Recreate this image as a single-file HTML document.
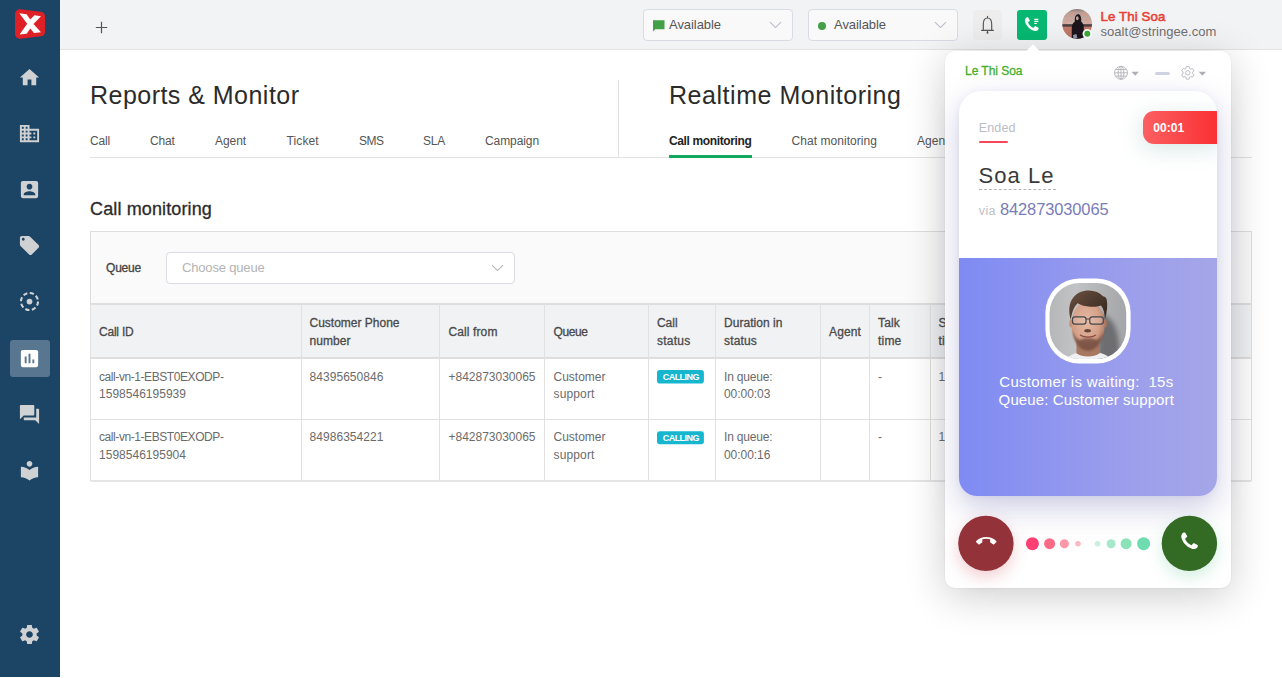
<!DOCTYPE html>
<html lang="en">
<head>
<meta charset="utf-8">
<title>Reports &amp; Monitor</title>
<style>
*{box-sizing:border-box;margin:0;padding:0}
html,body{width:1282px;height:678px;overflow:hidden;background:#fff;font-family:"Liberation Sans",sans-serif;color:#666;font-size:12px}
.abs{position:absolute}
.t{position:absolute;white-space:pre;display:block}
#side{position:absolute;left:0;top:0;width:60px;height:677px;background:#1b4465}
#side svg{position:absolute;fill:#cfd1d3}
#side .active{position:absolute;left:10px;top:340px;width:40px;height:37px;background:#587690;border-radius:3px}
#top{position:absolute;left:60px;top:0;width:1222px;height:50px;background:#f2f3f5;border-bottom:1px solid #e2e2e3}
.sel{position:absolute;top:9px;height:32px;width:150px;border:1px solid #d9dce5;border-radius:4px;background:#f9f9fa}
.line{position:absolute;background:#e2e2e2}
#filter{position:absolute;left:90px;top:231px;width:1162px;height:75px;border:1px solid #dedede;background:#fafafa}
#qsel{position:absolute;left:166px;top:252px;width:349px;height:32px;border:1px solid #d9dce6;border-radius:4px;background:#fff}
#thead{position:absolute;left:90px;top:303px;width:1162px;height:56px;background:#f1f2f4;border-top:2px solid #dedede;border-bottom:2px solid #dedede}
.vl{position:absolute;top:304px;width:1px;height:177px;background:#e1e1e1}
.hl{position:absolute;left:90px;width:1162px;height:1px;background:#e1e1e1}
.badge{position:absolute;left:657px;width:47px;height:13px;background:#17b6cf;border-radius:2px}
#w{position:absolute;left:944.7px;top:51px;width:286.6px;height:537px;background:#fff;border-radius:10px;box-shadow:0 8px 40px rgba(0,0,0,.2),0 0 0 1px rgba(0,0,0,.025)}
#card{position:absolute;left:959px;top:91px;width:258px;height:405px;border-radius:22px 22px 18px 18px;background:#fff;box-shadow:0 12px 30px rgba(108,108,175,.34),0 0 6px rgba(120,120,220,.08);overflow:hidden}
#purple{position:absolute;left:0;top:167px;width:258px;height:238px;background:linear-gradient(90deg,#7f8bf3 0%,#9a9dec 60%,#a5a6e8 100%)}
#timer{position:absolute;left:184px;top:20px;width:80px;height:33px;border-radius:11px 0 0 11px;background:linear-gradient(90deg,#fb6062,#fa2c2f);box-shadow:-2px 5px 22px rgba(130,180,175,.3)}
.dot{position:absolute;border-radius:50%}
.btn{position:absolute;top:516px;width:55px;height:55px;border-radius:50%}
</style>
</head>
<body>
<div id="side">
  <div class="active"></div>
<svg style="left:15px;top:9px" width="30" height="30" viewBox="0 0 30 30"><path d="M5 5.200L25 7.600V22.400L5 24.900Z" fill="#e02027" stroke="#e02027" stroke-width="10" stroke-linejoin="round"/><path d="M4.300 4.200L11.600 5.200L15.300 10.600L19.400 6.200L26 7.200L18.500 15L26 23.300L19 24L15.300 19.400L11.700 24.800L4.600 25.600L12.200 14.800Z" fill="#fff"/></svg>
<svg style="left:18px;top:66.0px" width="23" height="23" viewBox="0 0 24 24"><path d="M10 20v-6h4v6h5v-8h3L12 3 2 12h3v8z"/></svg>
<svg style="left:18px;top:122.0px" width="23" height="23" viewBox="0 0 24 24"><path d="M12 7V3H2v18h20V7H12zM6 19H4v-2h2v2zm0-4H4v-2h2v2zm0-4H4V9h2v2zm0-4H4V5h2v2zm4 12H8v-2h2v2zm0-4H8v-2h2v2zm0-4H8V9h2v2zm0-4H8V5h2v2zm10 12h-8v-2h2v-2h-2v-2h2v-2h-2V9h8v10zm-2-8h-2v2h2v-2zm0 4h-2v2h2v-2z"/></svg>
<svg style="left:18px;top:178.0px" width="23" height="23" viewBox="0 0 24 24"><path d="M3 5v14c0 1.1.89 2 2 2h14c1.1 0 2-.9 2-2V5c0-1.1-.9-2-2-2H5c-1.11 0-2 .9-2 2zm12 4c0 1.66-1.34 3-3 3s-3-1.34-3-3 1.34-3 3-3 3 1.34 3 3zm-9 8c0-2 4-3.1 6-3.1s6 1.1 6 3.1v1H6v-1z"/></svg>
<svg style="left:18px;top:234.0px" width="23" height="23" viewBox="0 0 24 24"><path d="M21.41 11.58l-9-9C12.05 2.22 11.55 2 11 2H4c-1.1 0-2 .9-2 2v7c0 .55.22 1.05.59 1.42l9 9c.36.36.86.58 1.41.58.55 0 1.05-.22 1.41-.59l7-7c.37-.36.59-.86.59-1.41 0-.55-.23-1.06-.59-1.42zM5.5 7C4.67 7 4 6.33 4 5.5S4.67 4 5.5 4 7 4.67 7 5.5 6.33 7 5.5 7z"/></svg>
<svg style="left:18px;top:290.0px" width="23" height="23" viewBox="0 0 24 24"><circle cx="12" cy="12" r="8.9" fill="none" stroke="#cfd1d3" stroke-width="2.2" stroke-dasharray="4.4 2.59"/><circle cx="12" cy="12" r="3"/></svg>
<svg style="left:18px;top:347.0px;fill:#fff" width="23" height="23" viewBox="0 0 24 24"><path d="M19 3H5c-1.1 0-2 .9-2 2v14c0 1.1.9 2 2 2h14c1.1 0 2-.9 2-2V5c0-1.1-.9-2-2-2zM9 17H7v-7h2v7zm4 0h-2V7h2v10zm4 0h-2v-4h2v4z"/></svg>
<svg style="left:18px;top:403.0px" width="23" height="23" viewBox="0 0 24 24"><path d="M21 6h-2v9H6v2c0 .55.45 1 1 1h11l4 4V7c0-.55-.45-1-1-1zm-4 6V3c0-.55-.45-1-1-1H3c-.55 0-1 .45-1 1v14l4-4h10c.55 0 1-.45 1-1z"/></svg>
<svg style="left:18px;top:459.0px" width="23" height="23" viewBox="0 0 24 24"><path d="M12 11.55C9.64 9.35 6.48 8 3 8v11c3.48 0 6.64 1.35 9 3.55 2.36-2.19 5.52-3.55 9-3.55V8c-3.48 0-6.64 1.35-9 3.55zM12 8c1.66 0 3-1.34 3-3s-1.34-3-3-3-3 1.34-3 3 1.34 3 3 3z"/></svg>
<svg style="left:18px;top:623.0px" width="23" height="23" viewBox="0 0 24 24"><path d="M19.43 12.98c.04-.32.07-.64.07-.98s-.03-.66-.07-.98l2.11-1.65c.19-.15.24-.42.12-.64l-2-3.46c-.12-.22-.39-.3-.61-.22l-2.49 1c-.52-.4-1.08-.73-1.69-.98l-.38-2.65C14.46 2.18 14.25 2 14 2h-4c-.25 0-.46.18-.49.42l-.38 2.65c-.61.25-1.17.59-1.69.98l-2.49-1c-.23-.09-.49 0-.61.22l-2 3.46c-.13.22-.07.49.12.64l2.11 1.65c-.04.32-.07.65-.07.98s.03.66.07.98l-2.11 1.65c-.19.15-.24.42-.12.64l2 3.46c.12.22.39.3.61.22l2.49-1c.52.4 1.08.73 1.69.98l.38 2.65c.03.24.24.42.49.42h4c.25 0 .46-.18.49-.42l.38-2.65c.61-.25 1.17-.59 1.69-.98l2.49 1c.23.09.49 0 .61-.22l2-3.46c.12-.22.07-.49-.12-.64l-2.11-1.65zM12 15.5c-1.93 0-3.5-1.57-3.5-3.5s1.57-3.5 3.5-3.5 3.5 1.57 3.5 3.5-1.57 3.5-3.5 3.5z"/></svg>

</div>
<div id="top"></div>
<svg class="abs" style="left:95px;top:21px" width="13" height="13" viewBox="0 0 13 13"><path d="M6.5 0.8V12.2M0.8 6.5H12.2" stroke="#555" stroke-width="1.2" fill="none"/></svg>
<div class="sel" style="left:643px"></div>
<svg class="abs" style="left:652px;top:19px" width="14" height="14" viewBox="0 0 14 14"><path d="M1 1.2h11.5v9H3.2L1 12.4z" fill="#43a047"/></svg>
<svg class="abs" style="left:769px;top:21px" width="13" height="8" viewBox="0 0 13 8"><path d="M1 1.2l5.5 5.4L12 1.2" stroke="#b9bcc6" stroke-width="1.1" fill="none"/></svg>
<div class="sel" style="left:808px"></div>
<div class="abs" style="left:817.8px;top:21.7px;width:8.4px;height:8.4px;border-radius:50%;background:#43a047"></div>
<svg class="abs" style="left:934px;top:21px" width="13" height="8" viewBox="0 0 13 8"><path d="M1 1.2l5.5 5.4L12 1.2" stroke="#b9bcc6" stroke-width="1.1" fill="none"/></svg>
<div class="abs" style="left:973px;top:10px;width:29px;height:30px;border-radius:4px;background:#ededee"></div>
<svg class="abs" style="left:979px;top:14px" width="17" height="22" viewBox="0 0 17 22"><path d="M8.500 2.300V3.700M4.300 16.200V10.200C4.300 6.300 6 4 8.500 4S12.700 6.300 12.700 10.200V16.200M2.600 16.300H14.400" stroke="#555" stroke-width="1.150" fill="none" stroke-linecap="round"/><circle cx="8.500" cy="18.800" r="1" fill="#555"/><path d="M8.500 16.300v1.800" stroke="#555" stroke-width="1.100"/></svg>
<div class="abs" style="left:1017px;top:10px;width:30.3px;height:30px;border-radius:3px;background:#06b872"></div>
<svg class="abs" style="left:1023px;top:16.1px" width="17.5" height="17.5" viewBox="0 0 1792 1792"><path d="M1600 1240q0 27-10 70.500t-21 68.500q-21 50-122 106-94 51-186 51-27 0-53-3.500t-57.500-12.500-47-14.500-55.500-20.500-49-18q-98-35-175-83-127-79-264-216t-216-264q-48-77-83-175-3-9-18-49t-20.500-55.500-14.500-47-12.500-57.500-3.500-53q0-92 51-186 56-101 106-122 25-11 68.500-21t70.500-10q14 0 21 3 18 6 53 76 11 19 30 54t35 63.500 31 53.500q3 4 17.500 25t21.500 35.500 7 28.500q0 20-28.500 50t-62 55-62 53-28.500 46q0 9 5 22.500t8.500 20.500 14 24 11.500 19q76 137 174 235t235 174q2 1 19 11.500t24 14 20.500 8.500 22.500 5q18 0 46-28.500t53-62 55-62 50-28.500q14 0 28.500 7t35.500 21.500 25 17.500q25 15 53.500 31t63.500 35 54 30q70 35 76 53 3 7 3 21z" fill="#fff"/></svg>
<svg class="abs" style="left:1033px;top:17px" width="8" height="9" viewBox="0 0 8 9"><path d="M1.300 2.300h4M1.300 4.400h4M1.300 6.500h2.600" stroke="#fff" stroke-width="1.200"/></svg>
<!-- avatar -->
<svg class="abs" style="left:1061px;top:8px" width="34" height="34" viewBox="0 0 34 34">
<defs><clipPath id="avc"><circle cx="16.15" cy="15.9" r="14.9"/></clipPath>
<linearGradient id="avg" x1="0" y1="0" x2="0" y2="1"><stop offset="0" stop-color="#7d6f6f"/><stop offset=".12" stop-color="#b59c95"/><stop offset=".46" stop-color="#cdb3a8"/><stop offset=".49" stop-color="#4a3f3f"/><stop offset=".53" stop-color="#4a3f3f"/><stop offset=".57" stop-color="#c17a6a"/><stop offset="1" stop-color="#b87466"/></linearGradient>
<filter id="ab" x="-30%" y="-30%" width="160%" height="160%"><feGaussianBlur stdDeviation=".45"/></filter></defs>
<g clip-path="url(#avc)"><rect width="34" height="34" fill="url(#avg)"/>
<g filter="url(#ab)"><path d="M3 6h5v3H3zM11 4h4v3h-4zM21 5h5v3h-5zM5 11h6v2.500H5zM23 10h6v3h-6zM2 14h4v2H2zM25 14.500h5v1.500h-5z" fill="#d9998a" opacity=".55"/>
<path d="M10.800 32V19.500c0-3 1.600-5 3-5.800C13.500 9 14.800 6.200 17 6.200s3.600 2.500 3.200 7.500c1.400.8 2.600 3 2.600 5.800V32z" fill="#1c161b"/>
<ellipse cx="16.300" cy="10.300" rx="1.300" ry="2" fill="#c9a394"/>
<path d="M12 27l3.500-1 .8 4-3.800 1z" fill="#8d9bab"/></g></g>
<circle cx="26.3" cy="25.8" r="4.800" fill="#fff"/><circle cx="26.300" cy="25.800" r="3" fill="#3daa37"/></svg>

<div class="line" style="left:90px;top:157px;width:1162px;height:1px"></div>
<div class="line" style="left:618px;top:80px;width:1px;height:78px"></div>
<div class="abs" style="left:669px;top:155px;width:83px;height:3px;background:#14a75f"></div>
<div id="filter"></div>
<div id="qsel"></div>
<svg class="abs" style="left:491px;top:264px" width="13" height="8" viewBox="0 0 13 8"><path d="M1 1.2l5.5 5.4L12 1.2" stroke="#b5b5b5" stroke-width="1.1" fill="none"/></svg>
<div id="thead"></div>
<div class="hl" style="top:419px"></div>
<div class="hl" style="top:480px;height:2px;background:#e6e6e6;border-radius:0 0 2px 2px"></div>
<div class="vl" style="left:90px"></div>
<div class="vl" style="left:301px"></div>
<div class="vl" style="left:439px"></div>
<div class="vl" style="left:544px"></div>
<div class="vl" style="left:648px"></div>
<div class="vl" style="left:715px"></div>
<div class="vl" style="left:820px"></div>
<div class="vl" style="left:869px"></div>
<div class="vl" style="left:930px"></div>
<div class="vl" style="left:1251px"></div>

<svg class="abs" style="left:655px;top:368px" width="52" height="80" viewBox="0 0 52 80"><rect x="2" y="2.100" width="46.900" height="13.400" rx="2.800" fill="#17b6cf"/><rect x="2" y="63.300" width="46.900" height="13" rx="2.800" fill="#17b6cf"/></svg>
<span class="t" style="left:90.00px;top:83.00px;font-size:25px;line-height:25px;color:#2b2b2b;letter-spacing:0.472px;">Reports &amp; Monitor</span>
<span class="t" style="left:669.00px;top:83.00px;font-size:25px;line-height:25px;color:#2b2b2b;letter-spacing:0.535px;">Realtime Monitoring</span>
<span class="t" style="left:90.00px;top:135.00px;font-size:12px;line-height:12px;color:#555;letter-spacing:-0.168px;">Call</span>
<span class="t" style="left:150.00px;top:135.00px;font-size:12px;line-height:12px;color:#555;letter-spacing:-0.140px;">Chat</span>
<span class="t" style="left:215.00px;top:135.00px;font-size:12px;line-height:12px;color:#555;letter-spacing:-0.072px;">Agent</span>
<span class="t" style="left:286.50px;top:135.00px;font-size:12px;line-height:12px;color:#555;letter-spacing:0.123px;">Ticket</span>
<span class="t" style="left:359.00px;top:135.00px;font-size:12px;line-height:12px;color:#555;letter-spacing:-0.505px;">SMS</span>
<span class="t" style="left:423.00px;top:135.00px;font-size:12px;line-height:12px;color:#555;letter-spacing:-0.229px;">SLA</span>
<span class="t" style="left:485.00px;top:135.00px;font-size:12px;line-height:12px;color:#555;letter-spacing:-0.088px;">Campaign</span>
<span class="t" style="left:669.00px;top:135.00px;font-size:12px;line-height:12px;color:#222;font-weight:700;letter-spacing:-0.367px;">Call monitoring</span>
<span class="t" style="left:791.50px;top:135.00px;font-size:12px;line-height:12px;color:#555;letter-spacing:0.052px;">Chat monitoring</span>
<span class="t" style="left:917.00px;top:135.00px;font-size:12px;line-height:12px;color:#555;letter-spacing:0.017px;">Agent monitoring</span>
<span class="t" style="left:90.00px;top:200.00px;font-size:18px;line-height:18px;color:#2b2b2b;letter-spacing:0.129px;-webkit-text-stroke:0.3px #2b2b2b;">Call monitoring</span>
<span class="t" style="left:106.00px;top:262.00px;font-size:12px;line-height:12px;color:#444;letter-spacing:-0.206px;-webkit-text-stroke:0.3px #444;">Queue</span>
<span class="t" style="left:182.00px;top:261.00px;font-size:13px;line-height:13px;color:#b4b4b4;letter-spacing:-0.173px;">Choose queue</span>
<span class="t" style="left:669.00px;top:17.60px;font-size:13px;line-height:13px;color:#555;letter-spacing:-0.059px;">Available</span>
<span class="t" style="left:834.00px;top:17.60px;font-size:13px;line-height:13px;color:#555;letter-spacing:-0.059px;">Available</span>
<span class="t" style="left:1100.50px;top:10.20px;font-size:13.2px;line-height:13.2px;color:#ea4034;letter-spacing:0.145px;-webkit-text-stroke:0.55px #ea4034;">Le Thi Soa</span>
<span class="t" style="left:1100.50px;top:25.30px;font-size:13px;line-height:13px;color:#707070;letter-spacing:0.051px;">soalt@stringee.com</span>
<span class="t" style="left:99.00px;top:326.00px;font-size:12px;line-height:12px;color:#4a4a4a;letter-spacing:-0.217px;-webkit-text-stroke:0.3px #4a4a4a;">Call ID</span>
<span class="t" style="left:309.50px;top:317.00px;font-size:12px;line-height:12px;color:#4a4a4a;-webkit-text-stroke:0.3px #4a4a4a;">Customer Phone</span>
<span class="t" style="left:309.50px;top:335.00px;font-size:12px;line-height:12px;color:#4a4a4a;letter-spacing:0.052px;-webkit-text-stroke:0.3px #4a4a4a;">number</span>
<span class="t" style="left:448.50px;top:326.00px;font-size:12px;line-height:12px;color:#4a4a4a;letter-spacing:0.109px;-webkit-text-stroke:0.3px #4a4a4a;">Call from</span>
<span class="t" style="left:553.50px;top:326.00px;font-size:12px;line-height:12px;color:#4a4a4a;letter-spacing:-0.406px;-webkit-text-stroke:0.3px #4a4a4a;">Queue</span>
<span class="t" style="left:657.00px;top:317.00px;font-size:12px;line-height:12px;color:#4a4a4a;letter-spacing:-0.043px;-webkit-text-stroke:0.3px #4a4a4a;">Call</span>
<span class="t" style="left:657.00px;top:335.00px;font-size:12px;line-height:12px;color:#4a4a4a;letter-spacing:0.247px;-webkit-text-stroke:0.3px #4a4a4a;">status</span>
<span class="t" style="left:724.00px;top:317.00px;font-size:12px;line-height:12px;color:#4a4a4a;letter-spacing:0.043px;-webkit-text-stroke:0.3px #4a4a4a;">Duration in</span>
<span class="t" style="left:724.00px;top:335.00px;font-size:12px;line-height:12px;color:#4a4a4a;letter-spacing:0.164px;-webkit-text-stroke:0.3px #4a4a4a;">status</span>
<span class="t" style="left:829.00px;top:326.00px;font-size:12px;line-height:12px;color:#4a4a4a;letter-spacing:0.128px;-webkit-text-stroke:0.3px #4a4a4a;">Agent</span>
<span class="t" style="left:878.00px;top:317.00px;font-size:12px;line-height:12px;color:#4a4a4a;letter-spacing:0.164px;-webkit-text-stroke:0.3px #4a4a4a;">Talk</span>
<span class="t" style="left:878.00px;top:335.00px;font-size:12px;line-height:12px;color:#4a4a4a;letter-spacing:0.207px;-webkit-text-stroke:0.3px #4a4a4a;">time</span>
<span class="t" style="left:938.50px;top:317.00px;font-size:12px;line-height:12px;color:#4a4a4a;letter-spacing:0.231px;-webkit-text-stroke:0.3px #4a4a4a;">Start</span>
<span class="t" style="left:938.50px;top:335.00px;font-size:12px;line-height:12px;color:#4a4a4a;letter-spacing:0.207px;-webkit-text-stroke:0.3px #4a4a4a;">time</span>
<span class="t" style="left:99.00px;top:371.00px;font-size:12px;line-height:12px;color:#6b6b6b;letter-spacing:-0.423px;">call-vn-1-EBST0EXODP-</span>
<span class="t" style="left:99.00px;top:388.00px;font-size:12px;line-height:12px;color:#6b6b6b;letter-spacing:0.018px;">1598546195939</span>
<span class="t" style="left:309.50px;top:371.00px;font-size:12px;line-height:12px;color:#6b6b6b;letter-spacing:0.053px;">84395650846</span>
<span class="t" style="left:448.50px;top:371.00px;font-size:12px;line-height:12px;color:#6b6b6b;letter-spacing:-0.007px;">+842873030065</span>
<span class="t" style="left:553.50px;top:371.00px;font-size:12px;line-height:12px;color:#6b6b6b;">Customer</span>
<span class="t" style="left:553.50px;top:388.00px;font-size:12px;line-height:12px;color:#6b6b6b;letter-spacing:0.138px;">support</span>
<span class="t" style="left:724.00px;top:371.00px;font-size:12px;line-height:12px;color:#6b6b6b;letter-spacing:-0.172px;">In queue:</span>
<span class="t" style="left:724.00px;top:388.00px;font-size:12px;line-height:12px;color:#6b6b6b;letter-spacing:-0.052px;">00:00:03</span>
<span class="t" style="left:878.00px;top:371.00px;font-size:12px;line-height:12px;color:#6b6b6b;">-</span>
<span class="t" style="left:938.50px;top:371.00px;font-size:12px;line-height:12px;color:#6b6b6b;letter-spacing:0.075px;">1598546195</span>
<span class="t" style="left:662.70px;top:373.00px;font-size:9px;line-height:9px;color:#fff;font-weight:700;letter-spacing:-0.529px;">CALLING</span>
<span class="t" style="left:99.00px;top:431.00px;font-size:12px;line-height:12px;color:#6b6b6b;letter-spacing:-0.423px;">call-vn-1-EBST0EXODP-</span>
<span class="t" style="left:99.00px;top:449.00px;font-size:12px;line-height:12px;color:#6b6b6b;letter-spacing:0.018px;">1598546195904</span>
<span class="t" style="left:309.50px;top:431.00px;font-size:12px;line-height:12px;color:#6b6b6b;letter-spacing:0.053px;">84986354221</span>
<span class="t" style="left:448.50px;top:431.00px;font-size:12px;line-height:12px;color:#6b6b6b;letter-spacing:-0.007px;">+842873030065</span>
<span class="t" style="left:553.50px;top:431.00px;font-size:12px;line-height:12px;color:#6b6b6b;">Customer</span>
<span class="t" style="left:553.50px;top:449.00px;font-size:12px;line-height:12px;color:#6b6b6b;letter-spacing:0.138px;">support</span>
<span class="t" style="left:724.00px;top:431.00px;font-size:12px;line-height:12px;color:#6b6b6b;letter-spacing:-0.172px;">In queue:</span>
<span class="t" style="left:724.00px;top:449.00px;font-size:12px;line-height:12px;color:#6b6b6b;letter-spacing:-0.052px;">00:00:16</span>
<span class="t" style="left:878.00px;top:431.00px;font-size:12px;line-height:12px;color:#6b6b6b;">-</span>
<span class="t" style="left:938.50px;top:431.00px;font-size:12px;line-height:12px;color:#6b6b6b;letter-spacing:0.075px;">1598546195</span>
<span class="t" style="left:662.70px;top:434.00px;font-size:9px;line-height:9px;color:#fff;font-weight:700;letter-spacing:-0.529px;">CALLING</span>

<!-- widget -->
<div id="w"></div>
<svg class="abs" style="left:1023px;top:43px" width="20" height="9" viewBox="0 0 20 9"><path d="M2.5 9L10 1.2L17.5 9z" fill="#fff"/></svg>
<svg class="abs" style="left:1113px;top:64px" width="30" height="17" viewBox="0 0 30 17"><g stroke="#b3b4ba" stroke-width=".9" fill="none"><circle cx="8" cy="8.800" r="6.500"/><ellipse cx="8" cy="8.800" rx="2.900" ry="6.500"/><path d="M1.500 8.800h13M2.400 5.500h11.200M2.400 12.100h11.200M8 2.300v13"/></g><path d="M18.500 7.800h7.400l-3.700 4z" fill="#b0b1b7"/></svg>
<div class="abs" style="left:1155px;top:72px;width:15px;height:3px;border-radius:1.5px;background:#d0d3e3"></div>
<svg class="abs" style="left:1180px;top:64px" width="30" height="17" viewBox="0 0 30 17"><g transform="translate(0.3,1.300) scale(0.625)"><path d="M19.43 12.98c.04-.32.07-.64.07-.98s-.03-.66-.07-.98l2.11-1.65c.19-.15.24-.42.12-.64l-2-3.46c-.12-.22-.39-.3-.61-.22l-2.49 1c-.52-.4-1.08-.73-1.69-.98l-.38-2.65C14.46 2.18 14.25 2 14 2h-4c-.25 0-.46.18-.49.42l-.38 2.65c-.61.25-1.17.59-1.69.98l-2.49-1c-.23-.09-.49 0-.61.22l-2 3.46c-.13.22-.07.49.12.64l2.11 1.65c-.04.32-.07.65-.07.98s.03.66.07.98l-2.11 1.65c-.19.15-.24.42-.12.64l2 3.46c.12.22.39.3.61.22l2.49-1c.52.4 1.08.73 1.69.98l.38 2.65c.03.24.24.42.49.42h4c.25 0 .46-.18.49-.42l.38-2.65c.61-.25 1.17-.59 1.69-.98l2.49 1c.23.09.49 0 .61-.22l2-3.46c.12-.22.07-.49-.12-.64l-2.11-1.65z" fill="none" stroke="#b3b4ba" stroke-width="1.400"/><circle cx="12" cy="12" r="3.600" fill="none" stroke="#b3b4ba" stroke-width="1.400"/></g><path d="M18.700 7.800h7.400l-3.700 4z" fill="#b0b1b7"/></svg>
<div id="card">
  <div id="purple"></div>
  <div id="timer"></div>
  <div class="abs" style="left:20px;top:50px;width:29px;height:2px;background:#f4475a;border-radius:1px"></div>
  <div class="abs" style="left:20px;top:98px;width:77px;height:0;border-top:1px dashed #b5b5b5"></div>
</div>
<svg class="abs" style="left:1045px;top:278px" width="86" height="86" viewBox="0 0 86 86">
<defs><clipPath id="fc"><rect x="4.6" y="5" width="76.6" height="76" rx="30" ry="30"/></clipPath>
<linearGradient id="fbg" x1="0" y1="0" x2="1" y2="0"><stop offset="0" stop-color="#b3b4b6"/><stop offset=".35" stop-color="#c2c3c5"/><stop offset=".7" stop-color="#b0b1b3"/><stop offset="1" stop-color="#a2a3a6"/></linearGradient>
<radialGradient id="fsk" cx=".45" cy=".42" r=".62"><stop offset="0" stop-color="#e6bba3"/><stop offset=".65" stop-color="#d4a088"/><stop offset="1" stop-color="#a97762"/></radialGradient>
<linearGradient id="fhr" x1="0" y1="0" x2="1" y2="1"><stop offset="0" stop-color="#6b5142"/><stop offset=".5" stop-color="#4e3a2e"/><stop offset="1" stop-color="#33241c"/></linearGradient>
<filter id="b1" x="-30%" y="-30%" width="160%" height="160%"><feGaussianBlur stdDeviation="1"/></filter>
<filter id="b2" x="-30%" y="-30%" width="160%" height="160%"><feGaussianBlur stdDeviation="2.5"/></filter>
<filter id="b05" x="-30%" y="-30%" width="160%" height="160%"><feGaussianBlur stdDeviation=".5"/></filter></defs>
<rect x="0.4" y="0.4" width="85.2" height="85.2" rx="34" ry="34" fill="#fff"/>
<g clip-path="url(#fc)">
<rect width="86" height="86" fill="url(#fbg)"/>
<path d="M55 36c6 0 14 6 17 18s3 22 0 30H52z" fill="#58585c" opacity=".75" filter="url(#b2)"/>
<path d="M20 86c1-7 6-10 14-11.500h19c8 1.500 13 4.500 14 11.500z" fill="#efeff1" filter="url(#b05)"/>
<path d="M31.500 62h23v13.500c-6 4-17 4-23 0z" fill="#a87762" filter="url(#b05)"/>
<ellipse cx="26.300" cy="45.500" rx="2" ry="4" fill="#c48f78"/><ellipse cx="60" cy="45.500" rx="2" ry="4" fill="#a8745f"/>
<ellipse cx="43" cy="47" rx="16.600" ry="24" fill="url(#fsk)" filter="url(#b05)"/>
<path d="M27.500 53c1.500 12 8 19.500 15.500 19.500S57 65 58.500 53c-2 6-4.500 8.500-7.500 9-3.500-2.500-12.500-2.500-16 0-3-.5-5.500-3-7.500-9z" fill="#6e4a3c" opacity=".8" filter="url(#b1)"/>
<path d="M25.800 42c-2.500-9-2-17 2.500-22.500 3.500-4.500 9-7 15.500-7 6 0 11 2 14.500 6 1.500-.3 3 1 3.500 3.500 1 5 .3 12-1.800 19.500-.3-6.500-1.500-11-4-14-3 1-6.500 1.500-10.500 1.200-5-.3-9.500-1.500-13-3.500-3.500 3.500-5.700 9-6.700 16.800z" fill="url(#fhr)" filter="url(#b05)"/>
<g fill="rgba(230,230,235,.15)" stroke="#45454b" stroke-width="1.200"><rect x="27.500" y="38.800" width="13.500" height="7.400" rx="2.400"/><rect x="44.800" y="38.800" width="13.500" height="7.400" rx="2.400"/></g><path d="M41 41h3.800" stroke="#45454b" stroke-width="1.200"/>
<ellipse cx="42.600" cy="52.800" rx="3.400" ry="1.700" fill="#4a2b22" opacity=".8" filter="url(#b05)"/>
<path d="M35 57c4.500 2.800 11.500 2.800 16 0" stroke="#8c4a40" stroke-width="1.300" fill="none" filter="url(#b05)"/>
</g></svg>

<div class="btn" style="left:958px;background:transparent;box-shadow:0 6px 16px rgba(200,60,70,.25)"></div>
<div class="btn" style="left:1162px;background:transparent;box-shadow:0 6px 16px rgba(80,190,140,.25)"></div>
<svg class="abs" style="left:950px;top:510px" width="280" height="68" viewBox="0 0 280 68"><circle cx="35.900" cy="33.400" r="27.700" fill="#94323a"/><circle cx="239.400" cy="33.400" r="27.700" fill="#336b25"/><circle cx="82.4" cy="33.700" r="6.50" fill="#ff3f72"/><circle cx="99.6" cy="33.700" r="5.50" fill="#fc6a86"/><circle cx="114.4" cy="33.700" r="4.50" fill="#fb97a6"/><circle cx="128.0" cy="33.700" r="2.75" fill="#fbb8c3"/><circle cx="147.6" cy="33.700" r="2.75" fill="#c9f0dc"/><circle cx="161.1" cy="33.700" r="4.50" fill="#a7e8cb"/><circle cx="176.1" cy="33.700" r="5.50" fill="#8ce3b8"/><circle cx="193.6" cy="33.700" r="6.50" fill="#6fdcb0"/></svg>
<svg class="abs" style="left:976.2px;top:531.2px" width="20.5" height="20.5" viewBox="0 0 24 24"><path d="M12 9c-1.6 0-3.15.25-4.6.72v3.1c0 .39-.23.74-.56.9-.98.49-1.87 1.12-2.66 1.85-.18.18-.43.28-.7.28-.28 0-.53-.11-.71-.29L.29 13.08c-.18-.17-.29-.42-.29-.7 0-.28.11-.53.29-.71C3.34 8.78 7.46 7 12 7s8.66 1.78 11.71 4.67c.18.18.29.43.29.71 0 .28-.11.53-.29.71l-2.48 2.48c-.18.18-.43.29-.71.29-.27 0-.52-.11-.7-.28-.79-.74-1.69-1.36-2.67-1.85-.33-.16-.56-.5-.56-.9v-3.1C15.15 9.25 13.6 9 12 9z" fill="#fff"/></svg>
<svg class="abs" style="left:1178.6px;top:530.5px" width="21.1" height="21.1" viewBox="0 0 1792 1792"><path d="M1600 1240q0 27-10 70.500t-21 68.500q-21 50-122 106-94 51-186 51-27 0-53-3.500t-57.500-12.500-47-14.500-55.500-20.500-49-18q-98-35-175-83-127-79-264-216t-216-264q-48-77-83-175-3-9-18-49t-20.500-55.500-14.500-47-12.500-57.500-3.500-53q0-92 51-186 56-101 106-122 25-11 68.500-21t70.500-10q14 0 21 3 18 6 53 76 11 19 30 54t35 63.500 31 53.500q3 4 17.500 25t21.500 35.500 7 28.500q0 20-28.500 50t-62 55-62 53-28.500 46q0 9 5 22.500t8.500 20.500 14 24 11.500 19q76 137 174 235t235 174q2 1 19 11.500t24 14 20.500 8.500 22.500 5q18 0 46-28.500t53-62 55-62 50-28.500q14 0 28.500 7t35.500 21.500 25 17.500q25 15 53.500 31t63.500 35 54 30q70 35 76 53 3 7 3 21z" fill="#fff"/></svg>

<span class="t" style="left:965.00px;top:65.00px;font-size:12px;line-height:12px;color:#43b02a;letter-spacing:-0.033px;-webkit-text-stroke:0.3px #43b02a;">Le Thi Soa</span>
<span class="t" style="left:978.70px;top:121.80px;font-size:12.5px;line-height:12.5px;color:#bcbcc6;letter-spacing:0.149px;">Ended</span>
<span class="t" style="left:1153.30px;top:121.80px;font-size:12px;line-height:12px;color:#fff;font-weight:700;letter-spacing:0.059px;">00:01</span>
<span class="t" style="left:978.50px;top:165.20px;font-size:22px;line-height:22px;color:#3a3a3a;letter-spacing:1.044px;">Soa Le</span>
<span class="t" style="left:978.70px;top:204.50px;font-size:12.5px;line-height:12.5px;color:#c0c0c5;letter-spacing:0.439px;">via</span>
<span class="t" style="left:1000.00px;top:200.50px;font-size:16.5px;line-height:16.5px;color:#7a7cb8;letter-spacing:-0.135px;">842873030065</span>
<span class="t" style="left:999.30px;top:374.00px;font-size:15px;line-height:15px;color:#fff;letter-spacing:0.265px;">Customer is waiting:&nbsp; 15s</span>
<span class="t" style="left:998.60px;top:391.80px;font-size:15px;line-height:15px;color:#fff;letter-spacing:0.122px;">Queue: Customer support</span>
</body>
</html>
